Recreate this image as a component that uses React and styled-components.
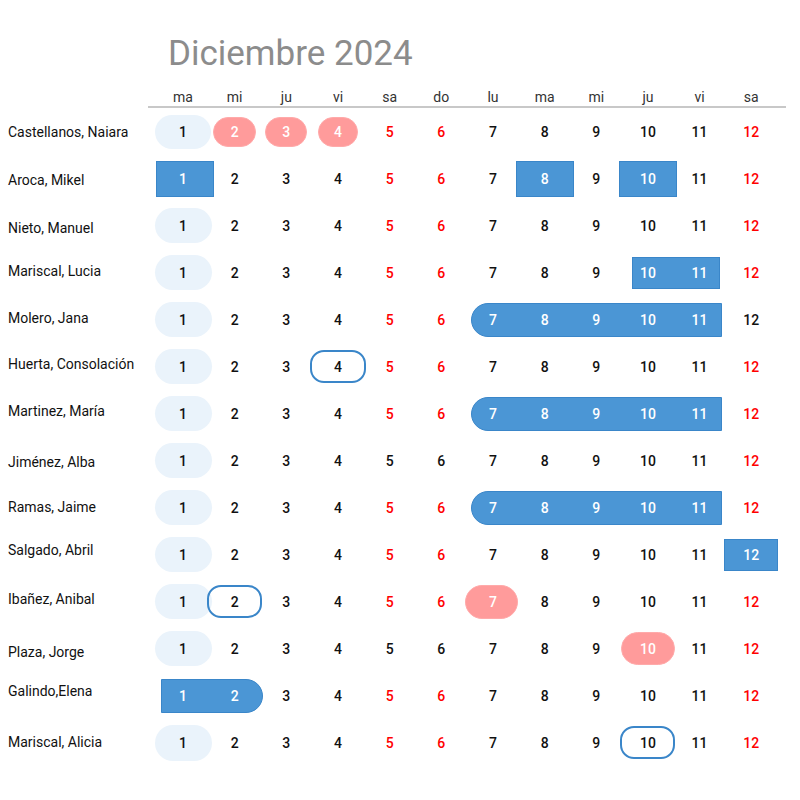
import React from "react";
import styled, { createGlobalStyle, css } from "styled-components";

const GlobalStyle = createGlobalStyle`
  body {
    margin: 0;
    background: #ffffff;
    font-family: Roboto, "Liberation Sans", sans-serif;
  }
`;

const DAYS = ["ma", "mi", "ju", "vi", "sa", "do", "lu", "ma", "mi", "ju", "vi", "sa"];
const WEEKEND = [5, 6, 12];

// marks: kind = light | pink | blue | outline, shape = pill | rect | left | right
const people = [
  {
    name: "Castellanos, Naiara",
    shift: 0,
    marks: [
      { kind: "light", from: 1, w: 56, h: 34 },
      { kind: "pink", from: 2, w: 43, h: 30 },
      { kind: "pink", from: 3, w: 42, h: 30 },
      { kind: "pink", from: 4, w: 40, h: 30 },
    ],
  },
  {
    name: "Aroca, Mikel",
    shift: 1,
    marks: [
      { kind: "blue", shape: "rect", from: 1, w: 58, h: 36, dx: 2 },
      { kind: "blue", shape: "rect", from: 8, w: 58, h: 36 },
      { kind: "blue", shape: "rect", from: 10, w: 58, h: 36 },
    ],
  },
  { name: "Nieto, Manuel", shift: 2, marks: [{ kind: "light", from: 1, w: 57, h: 35 }] },
  {
    name: "Mariscal, Lucia",
    shift: -2,
    marks: [
      { kind: "light", from: 1, w: 57, h: 35 },
      { kind: "blue", shape: "rect", from: 10, to: 11, ml: 10, mr: 5, h: 32 },
    ],
  },
  {
    name: "Molero, Jana",
    shift: -2,
    saturday: "black",
    marks: [
      { kind: "light", from: 1, w: 57, h: 35 },
      { kind: "blue", shape: "left", from: 7, to: 11, ml: 4, mr: 3, h: 34 },
    ],
  },
  {
    name: "Huerta, Consolación",
    shift: -3,
    marks: [
      { kind: "light", from: 1, w: 57, h: 35 },
      { kind: "outline", from: 4, w: 56, h: 33 },
    ],
  },
  {
    name: "Martinez, María",
    shift: -3,
    marks: [
      { kind: "light", from: 1, w: 57, h: 35 },
      { kind: "blue", shape: "left", from: 7, to: 11, ml: 4, mr: 3, h: 34 },
    ],
  },
  {
    name: "Jiménez, Alba",
    shift: 1,
    weekend: "black",
    marks: [{ kind: "light", from: 1, w: 57, h: 35 }],
  },
  {
    name: "Ramas, Jaime",
    shift: -1,
    marks: [
      { kind: "light", from: 1, w: 57, h: 35 },
      { kind: "blue", shape: "left", from: 7, to: 11, ml: 4, mr: 3, h: 34 },
    ],
  },
  {
    name: "Salgado, Abril",
    shift: -5,
    marks: [
      { kind: "light", from: 1, w: 57, h: 35 },
      { kind: "blue", shape: "rect", from: 12, w: 54, h: 32 },
    ],
  },
  {
    name: "Ibañez, Anibal",
    shift: -3,
    marks: [
      { kind: "light", from: 1, w: 57, h: 35 },
      { kind: "outline", from: 2, w: 55, h: 33 },
      { kind: "pink", from: 7, w: 53, h: 34, dx: -1 },
    ],
  },
  {
    name: "Plaza, Jorge",
    shift: 3,
    weekend: "black",
    marks: [
      { kind: "light", from: 1, w: 57, h: 35 },
      { kind: "pink", from: 10, w: 54, h: 33 },
    ],
  },
  {
    name: "Galindo,Elena",
    shift: -5,
    marks: [{ kind: "blue", shape: "right", from: 1, to: 2, ml: 4, mr: -2, h: 34 }],
  },
  {
    name: "Mariscal, Alicia",
    shift: -1,
    marks: [
      { kind: "light", from: 1, w: 57, h: 36 },
      { kind: "outline", from: 10, w: 55, h: 33 },
    ],
  },
];

const GRID = css`
  display: grid;
  grid-template-columns: 157.2px repeat(12, 51.67px);
`;

const Page = styled.div`
  width: 800px;
  height: 800px;
  padding-top: 36px;
  box-sizing: border-box;
  overflow: hidden;
`;

const Title = styled.h1`
  margin: 0;
  padding-left: 168px;
  font-size: 35px;
  line-height: 35px;
  font-weight: 400;
  color: #8c8c8c;
`;

const HeaderRow = styled.div`
  ${GRID};
  margin-top: 19px;
  height: 14px;
  line-height: 14px;
`;

const DayLabel = styled.div`
  grid-column: ${(p) => p.$col + 1};
  text-align: center;
  font-size: 14px;
  color: #333333;
`;

const Underline = styled.div`
  margin: 2px 0 0 148px;
  width: 638px;
  height: 2px;
  background: #c8c8c8;
`;

const Row = styled.div`
  ${GRID};
  height: 47px;
  align-items: center;
`;

const Name = styled.div`
  grid-column: 1;
  grid-row: 1;
  padding-left: 8px;
  font-size: 14px;
  color: #111111;
  white-space: nowrap;
  transform: translateY(${(p) => p.$shift}px);
`;

const kinds = {
  light: css`
    background: #eaf3fb;
  `,
  pink: css`
    background: #ff9b9b;
    border: 1px solid #ffaaaa;
  `,
  blue: css`
    background: #4b96d5;
    border: 1px solid #3a86c9;
  `,
  outline: css`
    border: 2.5px solid #3a86c9;
    border-radius: 14px;
  `,
};

const radii = {
  pill: "999px",
  rect: "0",
  left: "17px 0 0 17px",
  right: "0 17px 17px 0",
};

const Mark = styled.div`
  grid-row: 1;
  grid-column: ${(p) => p.$from + 1} / ${(p) => p.$to + 2};
  justify-self: ${(p) => (p.$w ? "center" : "stretch")};
  width: ${(p) => (p.$w ? `${p.$w}px` : "auto")};
  height: ${(p) => p.$h}px;
  margin-left: ${(p) => p.$ml}px;
  margin-right: ${(p) => p.$mr}px;
  transform: translateX(${(p) => p.$dx}px);
  box-sizing: border-box;
  border-radius: ${(p) => radii[p.$shape]};
  ${(p) => kinds[p.$kind]};
`;

const toneColours = {
  black: "#111111",
  red: "#ff0000",
  white: "#ffffff",
};

const DayNum = styled.div`
  grid-row: 1;
  grid-column: ${(p) => p.$col + 1};
  text-align: center;
  font-size: 14px;
  font-weight: 500;
  color: ${(p) => toneColours[p.$tone]};
  position: relative;
`;

const toneFor = (person, day) => {
  const filled = person.marks.some(
    (m) => (m.kind === "blue" || m.kind === "pink") && day >= m.from && day <= (m.to || m.from)
  );
  if (filled) return "white";
  if (day === 12 && person.saturday) return person.saturday;
  if (day === 12) return "red";
  if (WEEKEND.includes(day)) return person.weekend || "red";
  return "black";
};

const PersonRow = ({ person }) => (
  <Row>
    <Name $shift={person.shift}>{person.name}</Name>
    {person.marks.map((m, i) => (
      <Mark
        key={i}
        $kind={m.kind}
        $shape={m.shape || "pill"}
        $from={m.from}
        $to={m.to || m.from}
        $w={m.w}
        $h={m.h}
        $ml={m.ml || 0}
        $mr={m.mr || 0}
        $dx={m.dx || 0}
      />
    ))}
    {DAYS.map((_, i) => (
      <DayNum key={i} $col={i + 1} $tone={toneFor(person, i + 1)}>
        {i + 1}
      </DayNum>
    ))}
  </Row>
);

export default function App() {
  return (
    <Page>
      <GlobalStyle />
      <Title>Diciembre 2024</Title>
      <HeaderRow>
        {DAYS.map((d, i) => (
          <DayLabel key={i} $col={i + 1}>
            {d}
          </DayLabel>
        ))}
      </HeaderRow>
      <Underline />
      {people.map((p) => (
        <PersonRow key={p.name} person={p} />
      ))}
    </Page>
  );
}
